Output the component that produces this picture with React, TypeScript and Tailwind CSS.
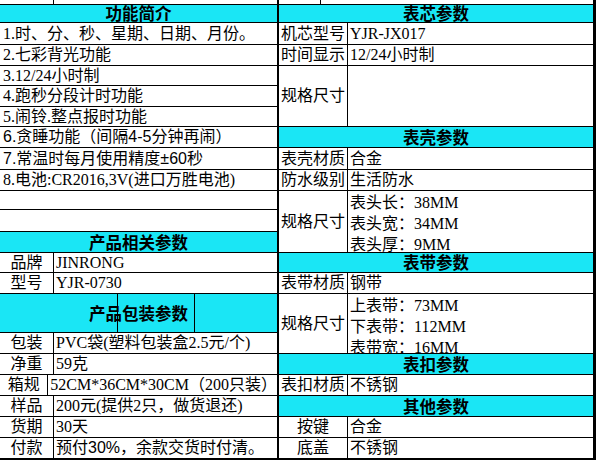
import React from "react";

const serif = { fontFamily: '"Liberation Serif", "Noto Sans CJK SC", serif' };

function Header({ h, children }: { h: string; children: React.ReactNode }) {
  return (
    <div
      className={`${h} flex items-center justify-center border-b border-black bg-[#1ae6f5] text-[16.5px] font-bold leading-none`}
      style={{ fontFamily: '"Noto Sans CJK SC", sans-serif' }}
    >
      {children}
    </div>
  );
}

function Line({ h, sans, children }: { h: string; sans?: boolean; children?: React.ReactNode }) {
  return (
    <div
      className={`${h} flex items-center whitespace-nowrap border-b border-black pl-[3px] leading-none`}
      style={sans ? { fontFamily: '"Liberation Sans", "Noto Sans CJK SC", sans-serif' } : undefined}
    >
      {children}
    </div>
  );
}

// label | value rows in the lower left block
function Pair({ h, label, sans, last, children }: { h: string; label: string; sans?: boolean; last?: boolean; children?: React.ReactNode }) {
  return (
    <div className={`${h} flex border-black ${last ? "border-b-2" : "border-b"}`}>
      <div className="flex w-[54px] items-center justify-center border-r border-black leading-none">{label}</div>
      <div
        className="flex flex-1 items-center whitespace-nowrap pl-[2px] leading-none"
        style={sans ? { fontFamily: '"Liberation Sans", "Noto Sans CJK SC", sans-serif' } : undefined}
      >
        {children}
      </div>
    </div>
  );
}

// label | value rows on the right side
function Spec({ h, label, center, last, children }: { h: string; label: string; center?: boolean; last?: boolean; children?: React.ReactNode }) {
  return (
    <div className={`${h} flex border-black ${last ? "border-b-2" : "border-b"}`}>
      <div className={`flex w-[69px] items-center border-r border-black leading-none ${center ? "justify-center" : "pl-[2px]"}`}>{label}</div>
      <div className="flex flex-1 items-center whitespace-nowrap pl-[2px] leading-none">{children}</div>
    </div>
  );
}

function Stack({ h, lines }: { h: string; lines: string[] }) {
  return (
    <div className={`${h} flex border-b border-black`}>
      <div className="flex w-[69px] items-center border-r border-black pl-[2px] leading-none">规格尺寸</div>
      <div className="flex-1 overflow-hidden whitespace-nowrap pl-[2px] pt-[1px] leading-[21px]">
        {lines.map((l) => (
          <div key={l}>{l}</div>
        ))}
      </div>
    </div>
  );
}

export default function App() {
  return (
    <div className="h-[461px] w-[596px] overflow-hidden bg-white text-[16px] text-black" style={serif}>
      {/* cut-off row above */}
      <div className="flex h-[5px] border-b border-black">
        <div className="flex w-[279px] border-r-2 border-black">
          <div className="w-[54px] border-r border-black" />
        </div>
        <div className="flex w-[317px] border-r-[3px] border-black">
          <div className="w-[42px] border-r border-black" />
        </div>
      </div>

      <div className="flex">
        {/* left block */}
        <div className="flex w-[279px] flex-col border-r-2 border-black">
          <Header h="h-[18px]">功能简介</Header>
          <Line h="h-[22px]">1.时、分、秒、星期、日期、月份。</Line>
          <Line h="h-[21px]">2.七彩背光功能</Line>
          <Line h="h-[20px]">3.12/24小时制</Line>
          <Line h="h-[21px]">4.跑秒分段计时功能</Line>
          <Line h="h-[20px]">5.闹铃.整点报时功能</Line>
          <Line h="h-[21px]" sans>6.贪睡功能（间隔4-5分钟再闹）</Line>
          <Line h="h-[22px]" sans>7.常温时每月使用精度±60秒</Line>
          <Line h="h-[21px]">8.电池:CR2016,3V(进口万胜电池)</Line>
          <Line h="h-[19px]" />
          <Line h="h-[22px]" />
          <Header h="h-[21px]">产品相关参数</Header>
          <Pair h="h-[20px]" label="品牌">JINRONG</Pair>
          <Pair h="h-[21px]" label="型号">YJR-0730</Pair>
          <div className="relative flex h-[39px] border-b border-black bg-[#1ae6f5]">
            <div className="w-[118px] border-r border-black" />
            <div className="w-[77px] border-r border-black" />
            <div className="flex-1" />
            <div
              className="absolute inset-0 flex items-center justify-center text-[16.5px] font-bold leading-none"
              style={{ fontFamily: '"Noto Sans CJK SC", sans-serif' }}
            >
              产品包装参数
            </div>
          </div>
          <Pair h="h-[21px]" label="包装">PVC袋(塑料包装盒2.5元/个)</Pair>
          <Pair h="h-[21px]" label="净重">59克</Pair>
          <Pair h="h-[21px]" label="箱规">52CM*36CM*30CM（200只装）</Pair>
          <Pair h="h-[21px]" label="样品">200元(提供2只，做货退还)</Pair>
          <Pair h="h-[21px]" label="货期">30天</Pair>
          <Pair h="h-[22px]" label="付款" sans last>预付30%，余款交货时付清。</Pair>
        </div>

        {/* right block */}
        <div className="flex w-[317px] flex-col border-r-[3px] border-black">
          <Header h="h-[18px]">表芯参数</Header>
          <Spec h="h-[22px]" label="机芯型号">YJR-JX017</Spec>
          <Spec h="h-[21px]" label="时间显示">12/24小时制</Spec>
          <Spec h="h-[61px]" label="规格尺寸" />
          <Header h="h-[21px]">表壳参数</Header>
          <Spec h="h-[22px]" label="表壳材质">合金</Spec>
          <Spec h="h-[21px]" label="防水级别">生活防水</Spec>
          <Stack h="h-[62px]" lines={["表头长：38MM", "表头宽：34MM", "表头厚：9MM"]} />
          <Header h="h-[20px]">表带参数</Header>
          <Spec h="h-[21px]" label="表带材质">钢带</Spec>
          <Stack h="h-[60px]" lines={["上表带：73MM", "下表带：112MM", "表带宽：16MM"]} />
          <Header h="h-[21px]">表扣参数</Header>
          <Spec h="h-[21px]" label="表扣材质">不锈钢</Spec>
          <Header h="h-[21px]">其他参数</Header>
          <Spec h="h-[21px]" label="按键" center>合金</Spec>
          <Spec h="h-[22px]" label="底盖" center last>不锈钢</Spec>
        </div>
      </div>
    </div>
  );
}
